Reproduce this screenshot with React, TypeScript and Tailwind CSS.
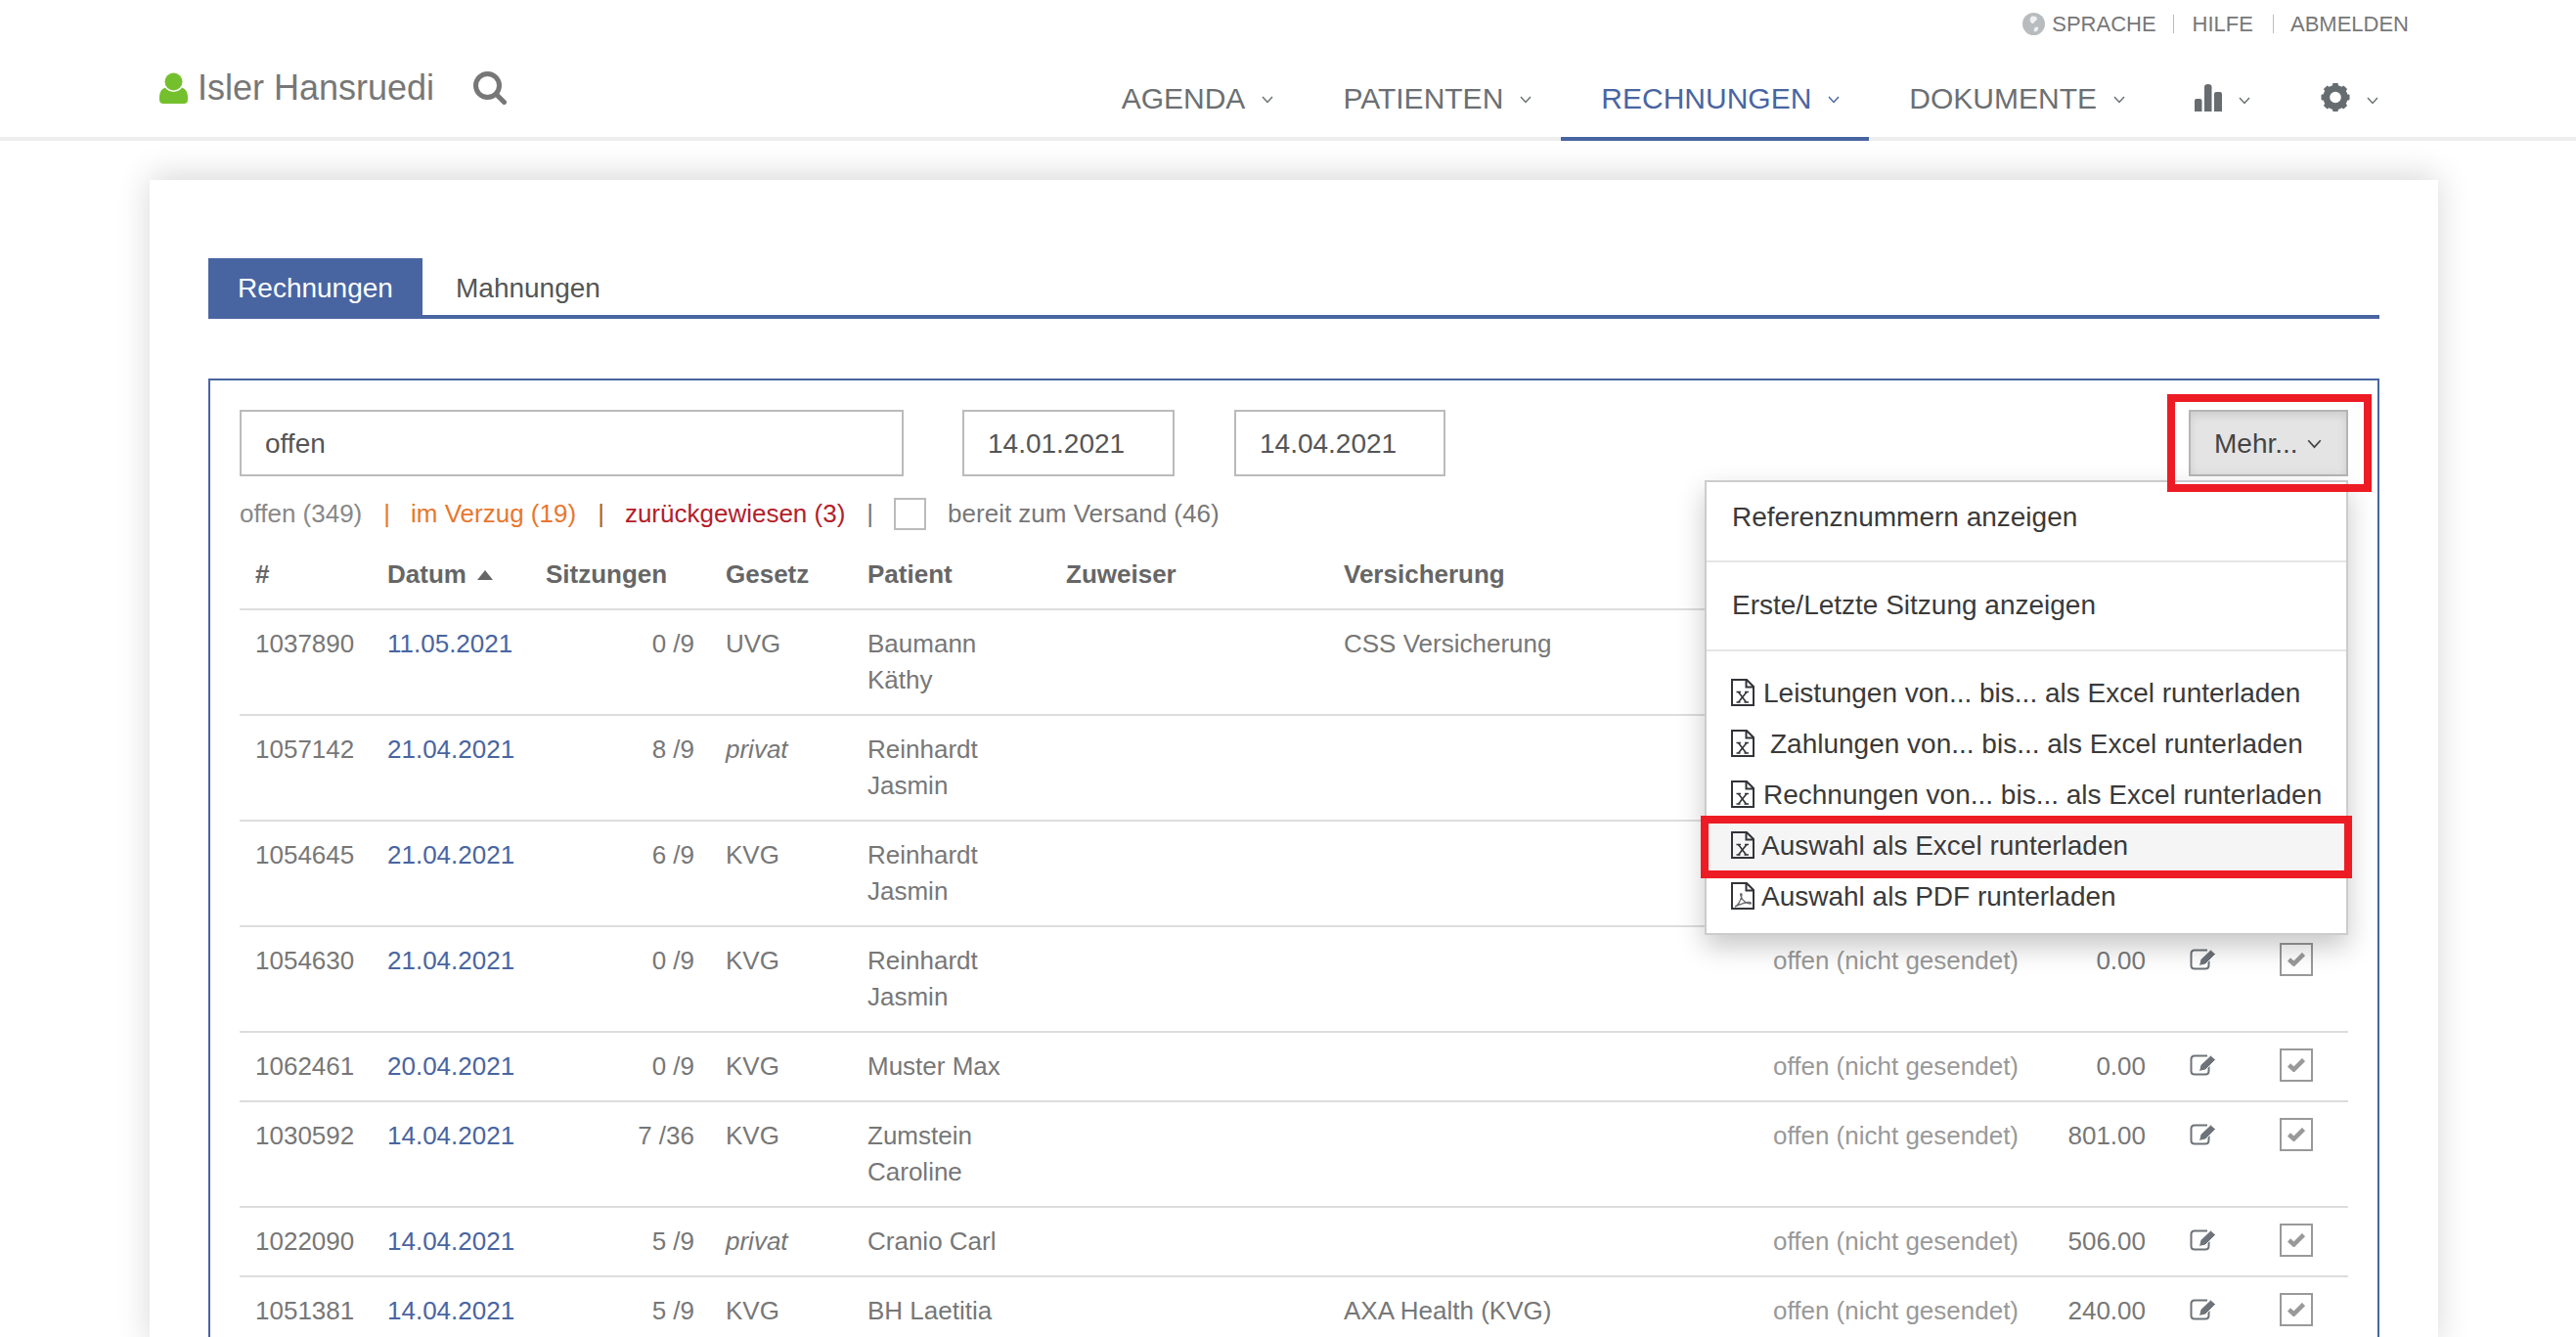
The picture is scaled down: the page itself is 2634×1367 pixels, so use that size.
import React from "react";

const Chevron = ({ className }: { className: string }) => (
  <svg viewBox="0 0 12 8" className={className} fill="none" stroke="currentColor" strokeWidth="1.4">
    <path d="M1 1l5 5.5L11 1" />
  </svg>
);

const UserIcon = () => (
  <svg viewBox="0 0 29 32" className="h-[32px] w-[29px]">
    <path d="M0 26c0-7 3-10 8-11h13c5 1 8 4 8 11v2c0 3-2 4-4 4H4c-2 0-4-1-4-4z" fill="#73c02c" />
    <circle cx="14.5" cy="9.5" r="10.5" fill="#fff" />
    <circle cx="14.5" cy="9.5" r="9" fill="#73c02c" />
  </svg>
);

const SearchIcon = () => (
  <svg viewBox="0 0 34 34" className="h-[34px] w-[34px]" fill="none" stroke="#777" strokeWidth="5">
    <circle cx="14.5" cy="14.5" r="12" />
    <path d="M23 23l8.5 8.5" strokeLinecap="round" />
  </svg>
);

const Globe = () => (
  <svg viewBox="0 0 23 23" className="h-[23px] w-[23px]">
    <circle cx="11.5" cy="11.5" r="11.5" fill="#b9bcbe" />
    <path d="M9 4c3-1 6 0 6 2s-2 2-3 4-3 1-4-1 0-4 1-5zM13 15c2-1 4 0 3 2s-3 3-4 2 0-3 1-4z" fill="#eef0f1" />
  </svg>
);

const Bars = () => (
  <svg viewBox="0 0 28 28" className="h-[28px] w-[28px]" fill="#666c70">
    <path d="M0 28V17q0-2 2-2h3.500q2 0 2 2v11zM10 28V3q0-3 3.800-3t3.700 3v25zM20 28V10q0-2 2-2h4q2 0 2 2v18z" />
  </svg>
);

const Gear = () => (
  <svg viewBox="0 0 30 30" className="h-[29px] w-[30px]" fill="#666c70">
    <circle cx="15" cy="15" r="9.500" fill="none" stroke="#666c70" strokeWidth="7" />
    {[0, 45, 90, 135, 180, 225, 270, 315].map((a) => (
      <rect key={a} x="12" y="0" width="6" height="6" rx="1" transform={`rotate(${a} 15 15)`} />
    ))}
  </svg>
);

const DocBase = ({ children }: { children: React.ReactNode }) => (
  <svg viewBox="0 0 24 28" className="h-[28px] w-[24px] shrink-0" fill="none" stroke="#33343a" strokeWidth="2">
    <path d="M1 1h15l7 7v19H1zM15.500 1v7.500H23" />
    {children}
  </svg>
);

const XlsIcon = () => (
  <DocBase>
    <path d="M7.500 13.500l8 10.500M16 13.500L7.500 24" strokeWidth="1.600" />
    <path d="M5.500 13.500h4.500M14 13.500h4M5.500 24h4M13.500 24h4.500" strokeWidth="1.300" />
  </DocBase>
);

const PdfIcon = () => (
  <DocBase>
    <path d="M4 25c3-1 6-6 7-12 0-2-2-2-1 1 1 4 5 8 10 8 1-1-1-2-3-1.500-4 .500-8 2-13 4.500z" stroke="#6d6e73" strokeWidth="1.400" />
  </DocBase>
);

const EditIcon = () => (
  <svg viewBox="0 0 27 22" className="h-[22px] w-[27px]" fill="none">
    <path d="M18 1.500H5Q1.500 1.500 1.500 5v12Q1.500 20.500 5 20.500h11q3.500 0 3.500-3.500v-5" stroke="#6d7378" strokeWidth="2" />
    <path d="M9.500 17.500l1.500-6.500 10.500-10 5 4.500-10.500 10.500z" fill="#6d7378" stroke="#fff" strokeWidth="1" />
  </svg>
);

const CheckBox = () => (
  <div className="flex h-[34px] w-[34px] items-center justify-center border-[2px] border-[#999]">
    <svg viewBox="0 0 18 14" className="h-[14px] w-[18px]" fill="none" stroke="#999" strokeWidth="4.500">
      <path d="M1.500 7l5 4.500L16.500 1.500" />
    </svg>
  </div>
);

type Row = {
  id: string;
  date: string;
  sessions: string;
  law: string;
  italic?: boolean;
  patient: string[];
  insurer?: string;
  status?: string;
  amount?: string;
};

const OPEN = "offen (nicht gesendet)";

const rows: Row[] = [
  { id: "1037890", date: "11.05.2021", sessions: "0 /9", law: "UVG", patient: ["Baumann", "Käthy"], insurer: "CSS Versicherung" },
  { id: "1057142", date: "21.04.2021", sessions: "8 /9", law: "privat", italic: true, patient: ["Reinhardt", "Jasmin"] },
  { id: "1054645", date: "21.04.2021", sessions: "6 /9", law: "KVG", patient: ["Reinhardt", "Jasmin"] },
  { id: "1054630", date: "21.04.2021", sessions: "0 /9", law: "KVG", patient: ["Reinhardt", "Jasmin"], status: OPEN, amount: "0.00" },
  { id: "1062461", date: "20.04.2021", sessions: "0 /9", law: "KVG", patient: ["Muster Max"], status: OPEN, amount: "0.00" },
  { id: "1030592", date: "14.04.2021", sessions: "7 /36", law: "KVG", patient: ["Zumstein", "Caroline"], status: OPEN, amount: "801.00" },
  { id: "1022090", date: "14.04.2021", sessions: "5 /9", law: "privat", italic: true, patient: ["Cranio Carl"], status: OPEN, amount: "506.00" },
  { id: "1051381", date: "14.04.2021", sessions: "5 /9", law: "KVG", patient: ["BH Laetitia"], insurer: "AXA Health (KVG)", status: OPEN, amount: "240.00" },
];

const navItems = ["AGENDA", "PATIENTEN", "RECHNUNGEN", "DOKUMENTE"];

const headers = ["#", "Datum", "Sitzungen", "Gesetz", "Patient", "Zuweiser", "Versicherung"];

export default function App() {
  return (
    <div className="h-[1367px] overflow-hidden bg-white font-['Liberation_Sans',Arial,sans-serif] text-[#666]">
      <header className="flex h-[144px] flex-col border-b-4 border-[#eee] pl-[163px] pr-[171px]">
        <div className="flex h-[48px] items-center justify-end text-[22px] text-[#777]">
          <Globe />
          <span className="ml-[7px]">SPRACHE</span>
          <span className="ml-[17px] h-[19px] w-px bg-[#bbb]" />
          <span className="ml-[19px]">HILFE</span>
          <span className="ml-[20px] h-[19px] w-px bg-[#bbb]" />
          <span className="ml-[17px]">ABMELDEN</span>
        </div>
        <div className="flex flex-1 items-start justify-between">
          <div className="mt-[20px] flex items-center">
            <UserIcon />
            <span className="ml-[10px] text-[36px] leading-[44px] text-[#777]">Isler Hansruedi</span>
            <span className="ml-[40px]">
              <SearchIcon />
            </span>
          </div>
          <nav className="-mb-1 flex self-stretch text-[30px] leading-[36px]">
            {navItems.map((n) => (
              <div
                key={n}
                className={
                  n === "RECHNUNGEN"
                    ? "flex items-start border-b-4 border-[#4965a1] pl-[41px] pr-[30px] pt-[35px] text-[#4965a1]"
                    : "flex items-start border-b-4 border-transparent pl-[41px] pr-[30px] pt-[35px] text-[#6b6f72]"
                }
              >
                {n}
                <Chevron className="ml-[17px] mt-[15px] h-[8px] w-[12px]" />
              </div>
            ))}
            <div className="flex items-start border-b-4 border-transparent pl-[41px] pr-[31px] pt-[38px] text-[#6b6f72]">
              <Bars />
              <Chevron className="ml-[17px] mt-[13px] h-[8px] w-[12px]" />
            </div>
            <div className="flex items-start border-b-4 border-transparent pl-[41px] pr-[31px] pt-[37px] text-[#6b6f72]">
              <Gear />
              <Chevron className="ml-[17px] mt-[14px] h-[8px] w-[12px]" />
            </div>
          </nav>
        </div>
      </header>

      <main className="ml-[153px] mr-[141px] mt-[40px] bg-white px-[60px] pt-[80px] shadow-[0_-4px_32px_rgba(0,0,0,0.16)]">
        <div className="flex h-[62px] border-b-4 border-[#4965a1] text-[28px]">
          <div className="flex w-[219px] items-center justify-center bg-[#4965a1] pt-[3px] text-white">Rechnungen</div>
          <div className="flex items-center pl-[34px] pt-[3px] text-[#555]">Mahnungen</div>
        </div>

        <section className="relative mt-[61px] border-2 border-[#4965a1] px-[30px] pt-[30px] text-[26px] leading-[37px]">
          <div className="flex h-[68px] text-[28px] text-[#555]">
            <div className="flex w-[679px] items-center border-[2px] border-[#bbb] pl-[24px]">offen</div>
            <div className="ml-[60px] flex w-[217px] items-center border-[2px] border-[#bbb] pl-[24px]">14.01.2021</div>
            <div className="ml-[61px] flex w-[216px] items-center border-[2px] border-[#bbb] pl-[24px]">14.04.2021</div>
            <div className="relative ml-auto w-[163px]">
              <div className="flex h-full items-center border-[2px] border-[#b5b5b5] bg-[#e4e4e4] pl-[24px] text-[#444] shadow-[inset_0_4px_8px_rgba(0,0,0,0.1)]">
                Mehr...
                <Chevron className="ml-[8px] mt-[1px] h-[10px] w-[17px]" />
              </div>
              <div className="absolute -bottom-[16px] -left-[22px] -right-[24px] -top-[16px] z-20 border-[8px] border-[#ed1c24]" />
            </div>
          </div>

          <div className="mt-[22px] flex h-[33px] items-center">
            <span className="text-[#888]">offen (349)</span>
            <span className="ml-[22px] text-[#e8772e]">|</span>
            <span className="ml-[21px] text-[#e8772e]">im Verzug (19)</span>
            <span className="ml-[22px] text-[#a8652f]">|</span>
            <span className="ml-[21px] text-[#b3202a]">zurückgewiesen (3)</span>
            <span className="ml-[22px] text-[#777]">|</span>
            <span className="ml-[21px] h-[33px] w-[33px] border-[2px] border-[#bbb]" />
            <span className="ml-[22px] text-[#777]">bereit zum Versand (46)</span>
          </div>

          <table className="mt-[11px] w-full table-fixed">
            <colgroup>
              <col className="w-[135px]" />
              <col className="w-[162px]" />
              <col className="w-[184px]" />
              <col className="w-[145px]" />
              <col className="w-[203px]" />
              <col className="w-[284px]" />
              <col className="w-[439px]" />
              <col className="w-[284px]" />
              <col className="w-[129px]" />
              <col className="w-[105px]" />
              <col className="w-[86px]" />
            </colgroup>
            <thead>
              <tr className="border-b-2 border-[#ddd]">
                {headers.map((h) => (
                  <th key={h} className="p-[16px] text-left font-bold text-[#666]">
                    {h === "Datum" ? (
                      <span className="flex items-center whitespace-nowrap">
                        {h}
                        <svg viewBox="0 0 16 10" className="ml-[11px] h-[10px] w-[16px]" fill="#666">
                          <path d="M8 0l8 10H0z" />
                        </svg>
                      </span>
                    ) : (
                      h
                    )}
                  </th>
                ))}
                <th />
                <th />
                <th />
                <th />
              </tr>
            </thead>
            <tbody>
              {rows.map((r) => (
                <tr key={r.id} className="border-b-2 border-[#ddd] align-top">
                  <td className="p-[16px] text-[#777]">{r.id}</td>
                  <td className="p-[16px] text-[#4965a1]">{r.date}</td>
                  <td className="p-[16px] text-right text-[#777]">{r.sessions}</td>
                  <td className={r.italic ? "p-[16px] italic text-[#777]" : "p-[16px] text-[#777]"}>{r.law}</td>
                  <td className="whitespace-nowrap p-[16px] text-[#777]">
                    {r.patient.map((p) => (
                      <div key={p}>{p}</div>
                    ))}
                  </td>
                  <td className="p-[16px]" />
                  <td className="p-[16px] text-[#777]">{r.insurer}</td>
                  <td className="whitespace-nowrap p-[16px] text-[#999]">{r.status}</td>
                  <td className="p-[16px] text-right text-[#777]">{r.amount}</td>
                  <td className="pl-[29px] pt-[22px]">
                    <EditIcon />
                  </td>
                  <td className="pl-[16px] pt-[16px]">
                    <CheckBox />
                  </td>
                </tr>
              ))}
            </tbody>
          </table>

          <div className="absolute left-[1528px] top-[102px] z-10 w-[658px] border-[2px] border-[#ccc] bg-white pb-[12px] text-[28px] leading-[37px] text-[#3a3a3a] shadow-[0_12px_26px_rgba(0,0,0,0.22)]">
            <div className="h-[80px] pl-[26px] pt-[17px]">Referenznummern anzeigen</div>
            <div className="h-[91px] border-t-2 border-[#e5e5e5] pl-[26px] pt-[25px]">Erste/Letzte Sitzung anzeigen</div>
            <div className="border-t-2 border-[#e5e5e5] pt-[16px]">
              <div className="flex h-[52px] items-center pl-[25px]">
                <XlsIcon />
                <span className="ml-[9px]">Leistungen von... bis... als Excel runterladen</span>
              </div>
              <div className="flex h-[52px] items-center pl-[25px]">
                <XlsIcon />
                <span className="ml-[16px]">Zahlungen von... bis... als Excel runterladen</span>
              </div>
              <div className="flex h-[52px] items-center pl-[25px]">
                <XlsIcon />
                <span className="ml-[9px]">Rechnungen von... bis... als Excel runterladen</span>
              </div>
              <div className="relative flex h-[52px] items-center bg-[#f5f5f5] pl-[25px]">
                <XlsIcon />
                <span className="ml-[7px]">Auswahl als Excel runterladen</span>
                <div className="absolute -bottom-[8px] -left-[6px] -right-[6px] -top-[4px] border-[8px] border-[#ed1c24]" />
              </div>
              <div className="flex h-[52px] items-center pl-[25px]">
                <PdfIcon />
                <span className="ml-[7px]">Auswahl als PDF runterladen</span>
              </div>
            </div>
          </div>
        </section>
      </main>
    </div>
  );
}
